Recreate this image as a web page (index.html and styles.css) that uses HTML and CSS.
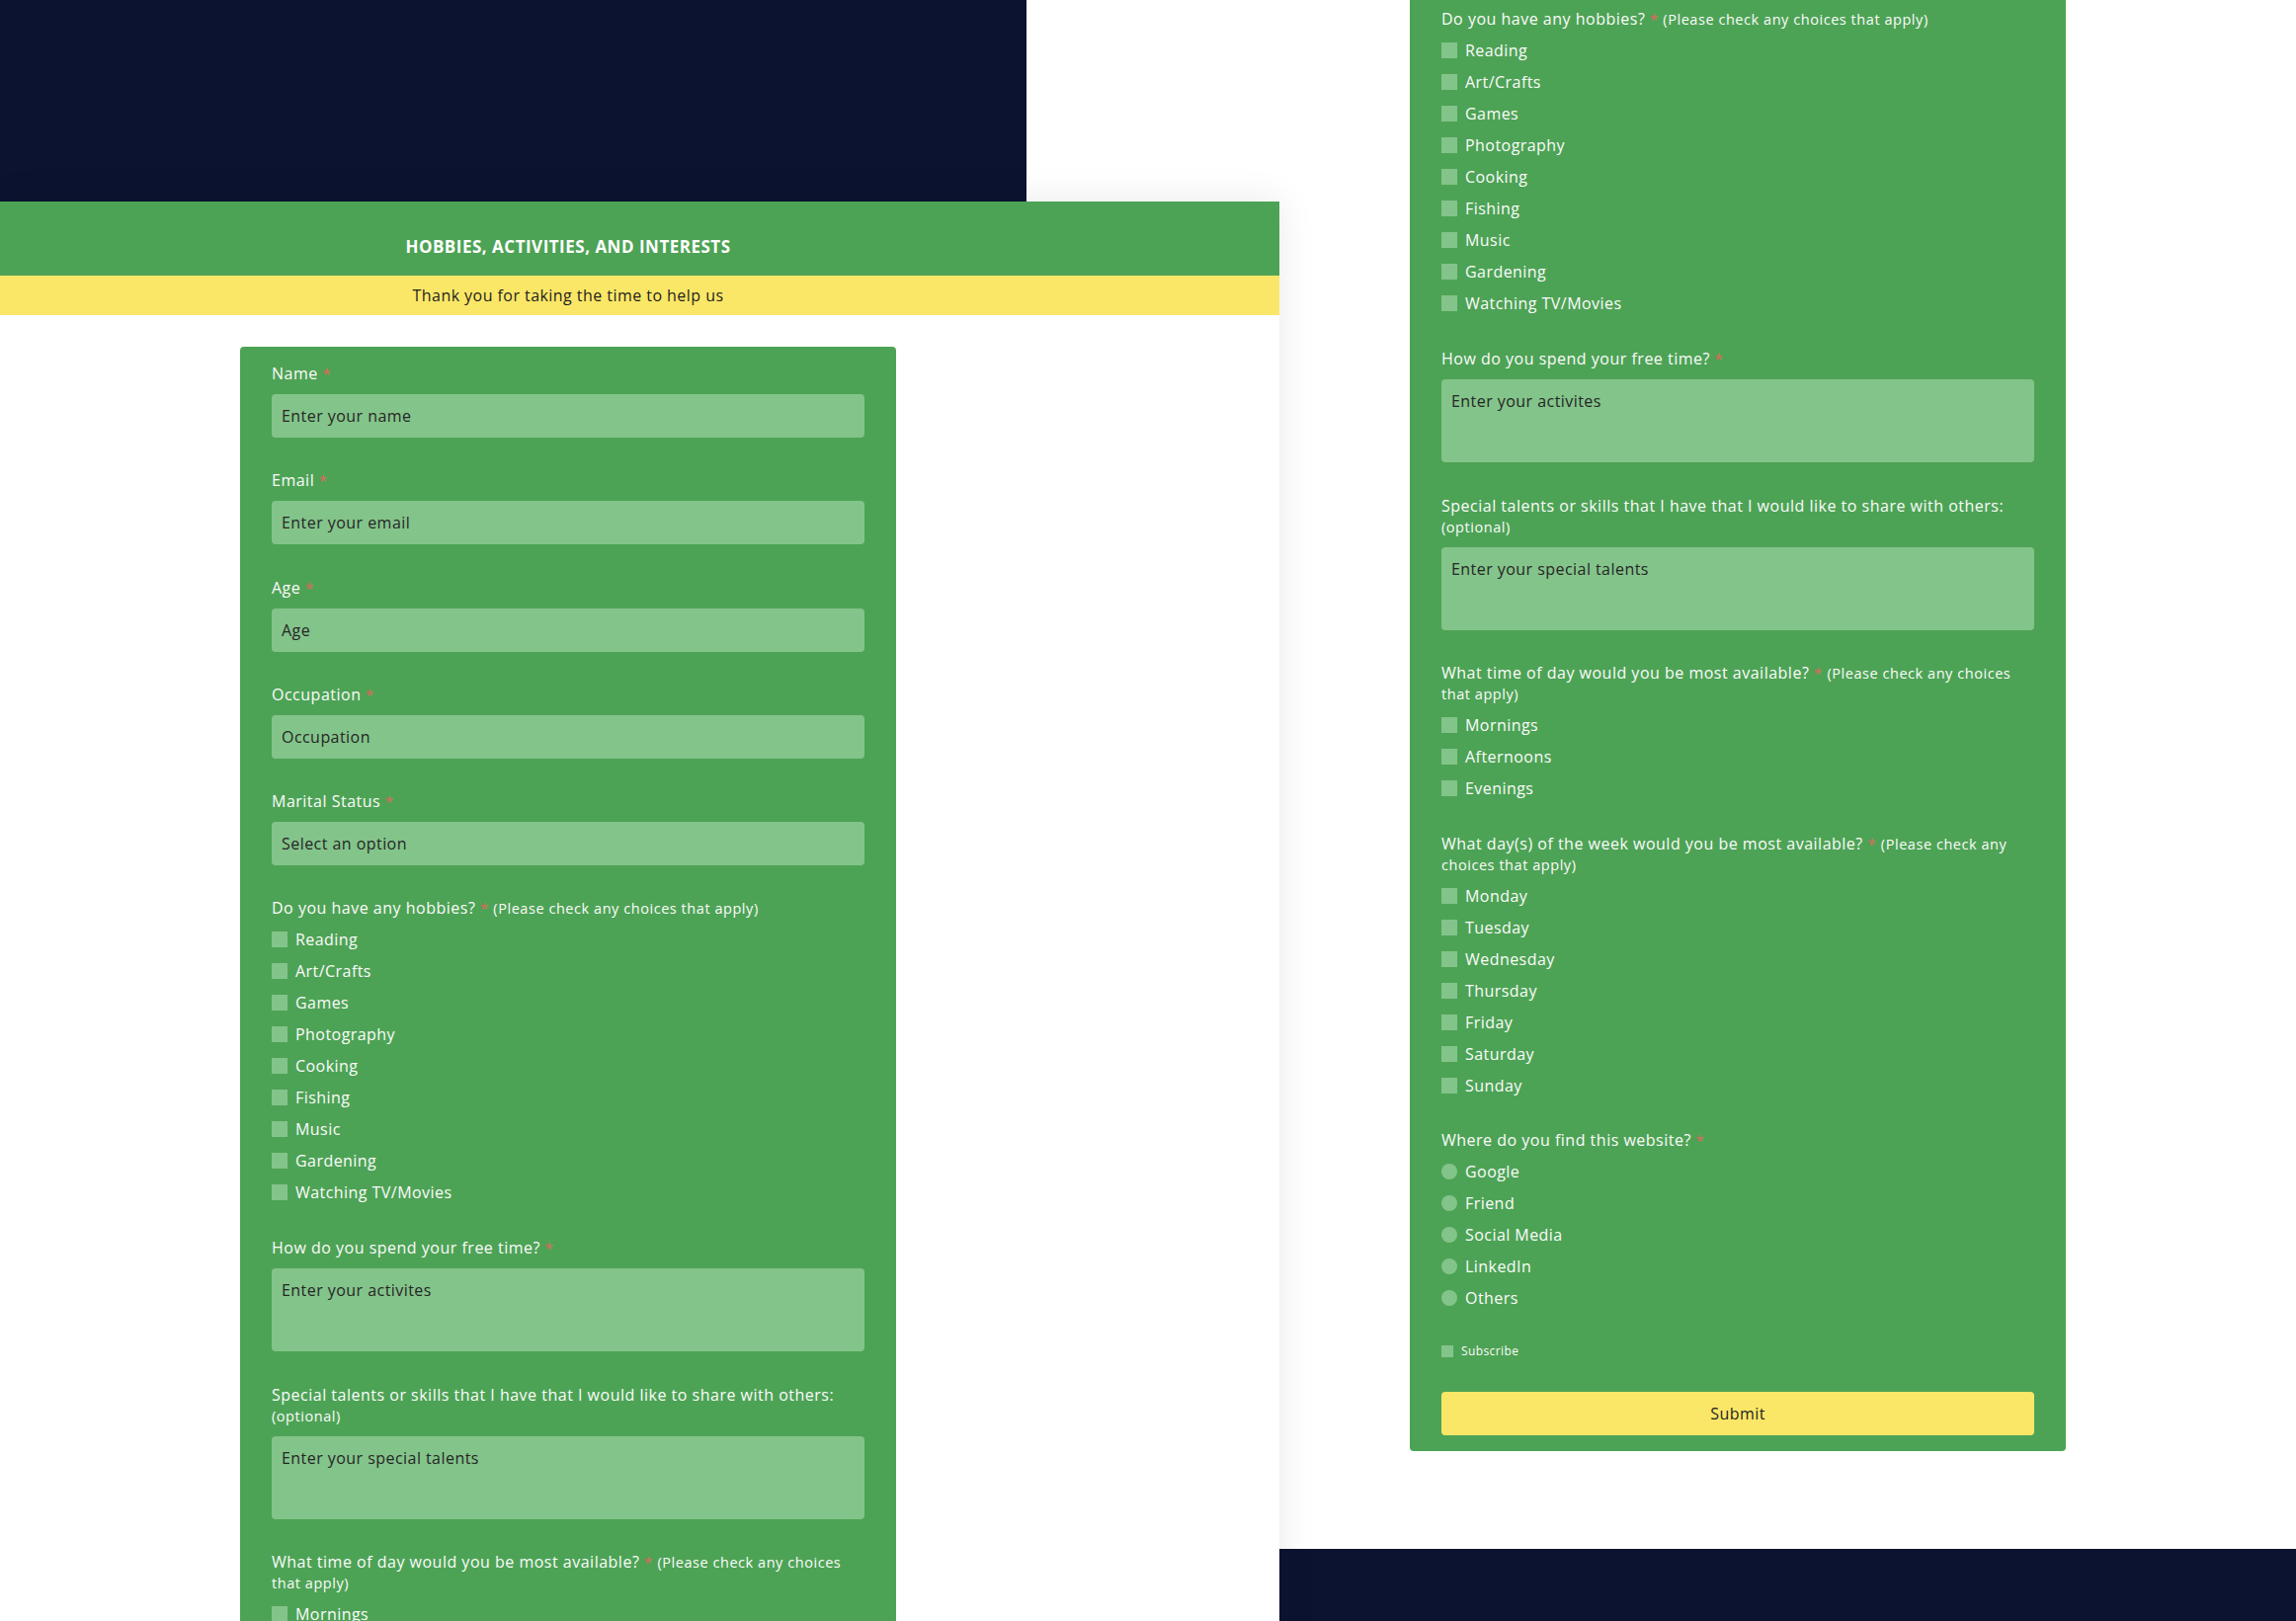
FILE: index.html
```html
<!DOCTYPE html>
<html lang="en">
<head>
<meta charset="utf-8">
<title>Hobbies, Activities, and Interests</title>
<link rel="stylesheet" href="styles.css">
</head>
<body>
<div class="canvas">
  <div class="navy navy-top"></div>
  <div class="navy navy-bottom"></div>

  <section class="screen-right">
    <form class="card">
      <div class="field"><label class="label">Name <span class="req">*</span></label><input class="input" type="text" placeholder="Enter your name"></div>
      <div class="field"><label class="label">Email <span class="req">*</span></label><input class="input" type="text" placeholder="Enter your email"></div>
      <div class="field"><label class="label">Age <span class="req">*</span></label><input class="input" type="text" placeholder="Age"></div>
      <div class="field"><label class="label">Occupation <span class="req">*</span></label><input class="input" type="text" placeholder="Occupation"></div>
      <div class="field"><label class="label">Marital Status <span class="req">*</span></label><div class="input select">Select an option</div></div>
      <div class="field group">
        <p class="label">Do you have any hobbies? <span class="req">*</span> <span class="hint">(Please check any choices that apply)</span></p>
        <label class="option"><span class="box"></span>Reading</label>
        <label class="option"><span class="box"></span>Art/Crafts</label>
        <label class="option"><span class="box"></span>Games</label>
        <label class="option"><span class="box"></span>Photography</label>
        <label class="option"><span class="box"></span>Cooking</label>
        <label class="option"><span class="box"></span>Fishing</label>
        <label class="option"><span class="box"></span>Music</label>
        <label class="option"><span class="box"></span>Gardening</label>
        <label class="option"><span class="box"></span>Watching TV/Movies</label>
      </div>
      <div class="field"><label class="label">How do you spend your free time? <span class="req">*</span></label><div class="input area">Enter your activites</div></div>
      <div class="field"><label class="label">Special talents or skills that I have that I would like to share with others:<br><span class="hint">(optional)</span></label><div class="input area">Enter your special talents</div></div>
      <div class="field group">
        <p class="label">What time of day would you be most available? <span class="req">*</span> <span class="hint">(Please check any choices<br>that apply)</span></p>
        <label class="option"><span class="box"></span>Mornings</label>
        <label class="option"><span class="box"></span>Afternoons</label>
        <label class="option"><span class="box"></span>Evenings</label>
      </div>
      <div class="field group">
        <p class="label">What day(s) of the week would you be most available? <span class="req">*</span> <span class="hint">(Please check any<br>choices that apply)</span></p>
        <label class="option"><span class="box"></span>Monday</label>
        <label class="option"><span class="box"></span>Tuesday</label>
        <label class="option"><span class="box"></span>Wednesday</label>
        <label class="option"><span class="box"></span>Thursday</label>
        <label class="option"><span class="box"></span>Friday</label>
        <label class="option"><span class="box"></span>Saturday</label>
        <label class="option"><span class="box"></span>Sunday</label>
      </div>
      <div class="field group last">
        <p class="label">Where do you find this website? <span class="req">*</span></p>
        <label class="option"><span class="box round"></span>Google</label>
        <label class="option"><span class="box round"></span>Friend</label>
        <label class="option"><span class="box round"></span>Social Media</label>
        <label class="option"><span class="box round"></span>LinkedIn</label>
        <label class="option"><span class="box round"></span>Others</label>
      </div>
      <div class="field tight"><label class="subscribe"><span class="box small"></span>Subscribe</label></div>
      <button class="submit" type="button">Submit</button>
    </form>
  </section>

  <section class="screen-left">
    <header class="hero"><h1 class="hero-title">HOBBIES, ACTIVITIES, AND INTERESTS</h1></header>
    <div class="notice"><p class="notice-text">Thank you for taking the time to help us</p></div>
    <div class="page">
      <form class="card">
        <div class="field"><label class="label">Name <span class="req">*</span></label><input class="input" type="text" placeholder="Enter your name"></div>
        <div class="field"><label class="label">Email <span class="req">*</span></label><input class="input" type="text" placeholder="Enter your email"></div>
        <div class="field"><label class="label">Age <span class="req">*</span></label><input class="input" type="text" placeholder="Age"></div>
        <div class="field"><label class="label">Occupation <span class="req">*</span></label><input class="input" type="text" placeholder="Occupation"></div>
        <div class="field"><label class="label">Marital Status <span class="req">*</span></label><div class="input select">Select an option</div></div>
        <div class="field group">
          <p class="label">Do you have any hobbies? <span class="req">*</span> <span class="hint">(Please check any choices that apply)</span></p>
          <label class="option"><span class="box"></span>Reading</label>
          <label class="option"><span class="box"></span>Art/Crafts</label>
          <label class="option"><span class="box"></span>Games</label>
          <label class="option"><span class="box"></span>Photography</label>
          <label class="option"><span class="box"></span>Cooking</label>
          <label class="option"><span class="box"></span>Fishing</label>
          <label class="option"><span class="box"></span>Music</label>
          <label class="option"><span class="box"></span>Gardening</label>
          <label class="option"><span class="box"></span>Watching TV/Movies</label>
        </div>
        <div class="field"><label class="label">How do you spend your free time? <span class="req">*</span></label><div class="input area">Enter your activites</div></div>
        <div class="field"><label class="label">Special talents or skills that I have that I would like to share with others:<br><span class="hint">(optional)</span></label><div class="input area">Enter your special talents</div></div>
        <div class="field group">
          <p class="label">What time of day would you be most available? <span class="req">*</span> <span class="hint">(Please check any choices<br>that apply)</span></p>
          <label class="option"><span class="box"></span>Mornings</label>
          <label class="option"><span class="box"></span>Afternoons</label>
          <label class="option"><span class="box"></span>Evenings</label>
        </div>
      </form>
    </div>
  </section>
</div>
</body>
</html>
```
FILE: styles.css
```css
* { box-sizing: border-box; }
html, body { margin: 0; padding: 0; }
body {
  width: 2324px;
  height: 1641px;
  overflow: hidden;
  background: #ffffff;
  font-family: "Open Sans", "Liberation Sans", sans-serif;
  font-size: 16px;
  color: #ffffff;
}
.canvas { position: relative; width: 2324px; height: 1641px; overflow: hidden; }

.navy { position: absolute; background: #0b1330; }
.navy-top { left: 0; top: 0; width: 1039px; height: 204px; }
.navy-bottom { left: 1295px; top: 1568px; width: 1029px; height: 73px; }

.screen-left {
  position: absolute;
  left: 0;
  top: 204px;
  width: 1295px;
  height: 1500px;
  background: #ffffff;
  box-shadow: 0 0 36px rgba(0, 0, 0, 0.09);
  z-index: 2;
}
.screen-right {
  position: absolute;
  left: 1427px;
  top: -549px;
  width: 664px;
  z-index: 1;
}

.hero {
  background: #4da355;
  height: 75px;
  padding-top: 33px;
}
.hero-title {
  margin: 0;
  width: 1150px;
  text-align: center;
  font-size: 17px;
  line-height: 25px;
  font-weight: 700;
  letter-spacing: 0.5px;
  color: #ffffff;
}
.notice {
  background: #fbe767;
  height: 40px;
  padding-top: 9px;
}
.notice-text {
  margin: 0;
  width: 1150px;
  text-align: center;
  font-size: 16px;
  line-height: 22px;
  letter-spacing: 0.45px;
  color: #1f1f1f;
}
.page {
  width: 1150px;
  padding-top: 32px;
}
.page .card { margin: 0 auto; }

.card {
  width: 664px;
  background: #4da355;
  border-radius: 4px;
  padding: 17px 32px 16px;
  margin: 0;
}
.field {
  display: flex;
  flex-direction: column;
  gap: 10px;
  margin-bottom: 33.3px;
}
.field.group { margin-bottom: 34.8px; }
.field.group.last { margin-bottom: 33.3px; }
.field.tight { margin-bottom: 31.8px; }
.label {
  margin: 0;
  font-size: 16px;
  line-height: 21px;
  letter-spacing: 0.5px;
  color: #fbfbfb;
}
.req {
  color: #e0665c;
  font-size: 15px;
}
.hint { font-size: 14.5px; letter-spacing: 0.55px; }

.input {
  display: block;
  width: 100%;
  height: 44px;
  border: 0;
  border-radius: 4px;
  background: #83c48a;
  padding: 0 10px;
  font-family: inherit;
  font-size: 16px;
  letter-spacing: 0.45px;
  color: #262626;
  outline: none;
}
.input::placeholder { color: #262626; opacity: 1; }
.select { display: flex; align-items: center; }
.area {
  height: 84px;
  padding: 12px 10px;
  line-height: 21px;
}

.option {
  display: flex;
  align-items: center;
  gap: 8px;
  height: 22px;
  font-size: 16px;
  letter-spacing: 0.45px;
  color: #fbfbfb;
}
.box {
  flex: none;
  width: 16px;
  height: 16px;
  background: #83c48a;
}
.box.round { border-radius: 50%; }
.box.small { width: 12px; height: 12px; }
.subscribe {
  display: flex;
  align-items: center;
  gap: 8px;
  height: 18px;
  font-size: 12px;
  letter-spacing: 0.4px;
  color: #fbfbfb;
}
.submit {
  display: block;
  width: 100%;
  height: 44px;
  border: 0;
  border-radius: 4px;
  background: #fbe767;
  font-family: inherit;
  font-size: 16px;
  letter-spacing: 0.45px;
  color: #1f1f1f;
  cursor: pointer;
}
```
